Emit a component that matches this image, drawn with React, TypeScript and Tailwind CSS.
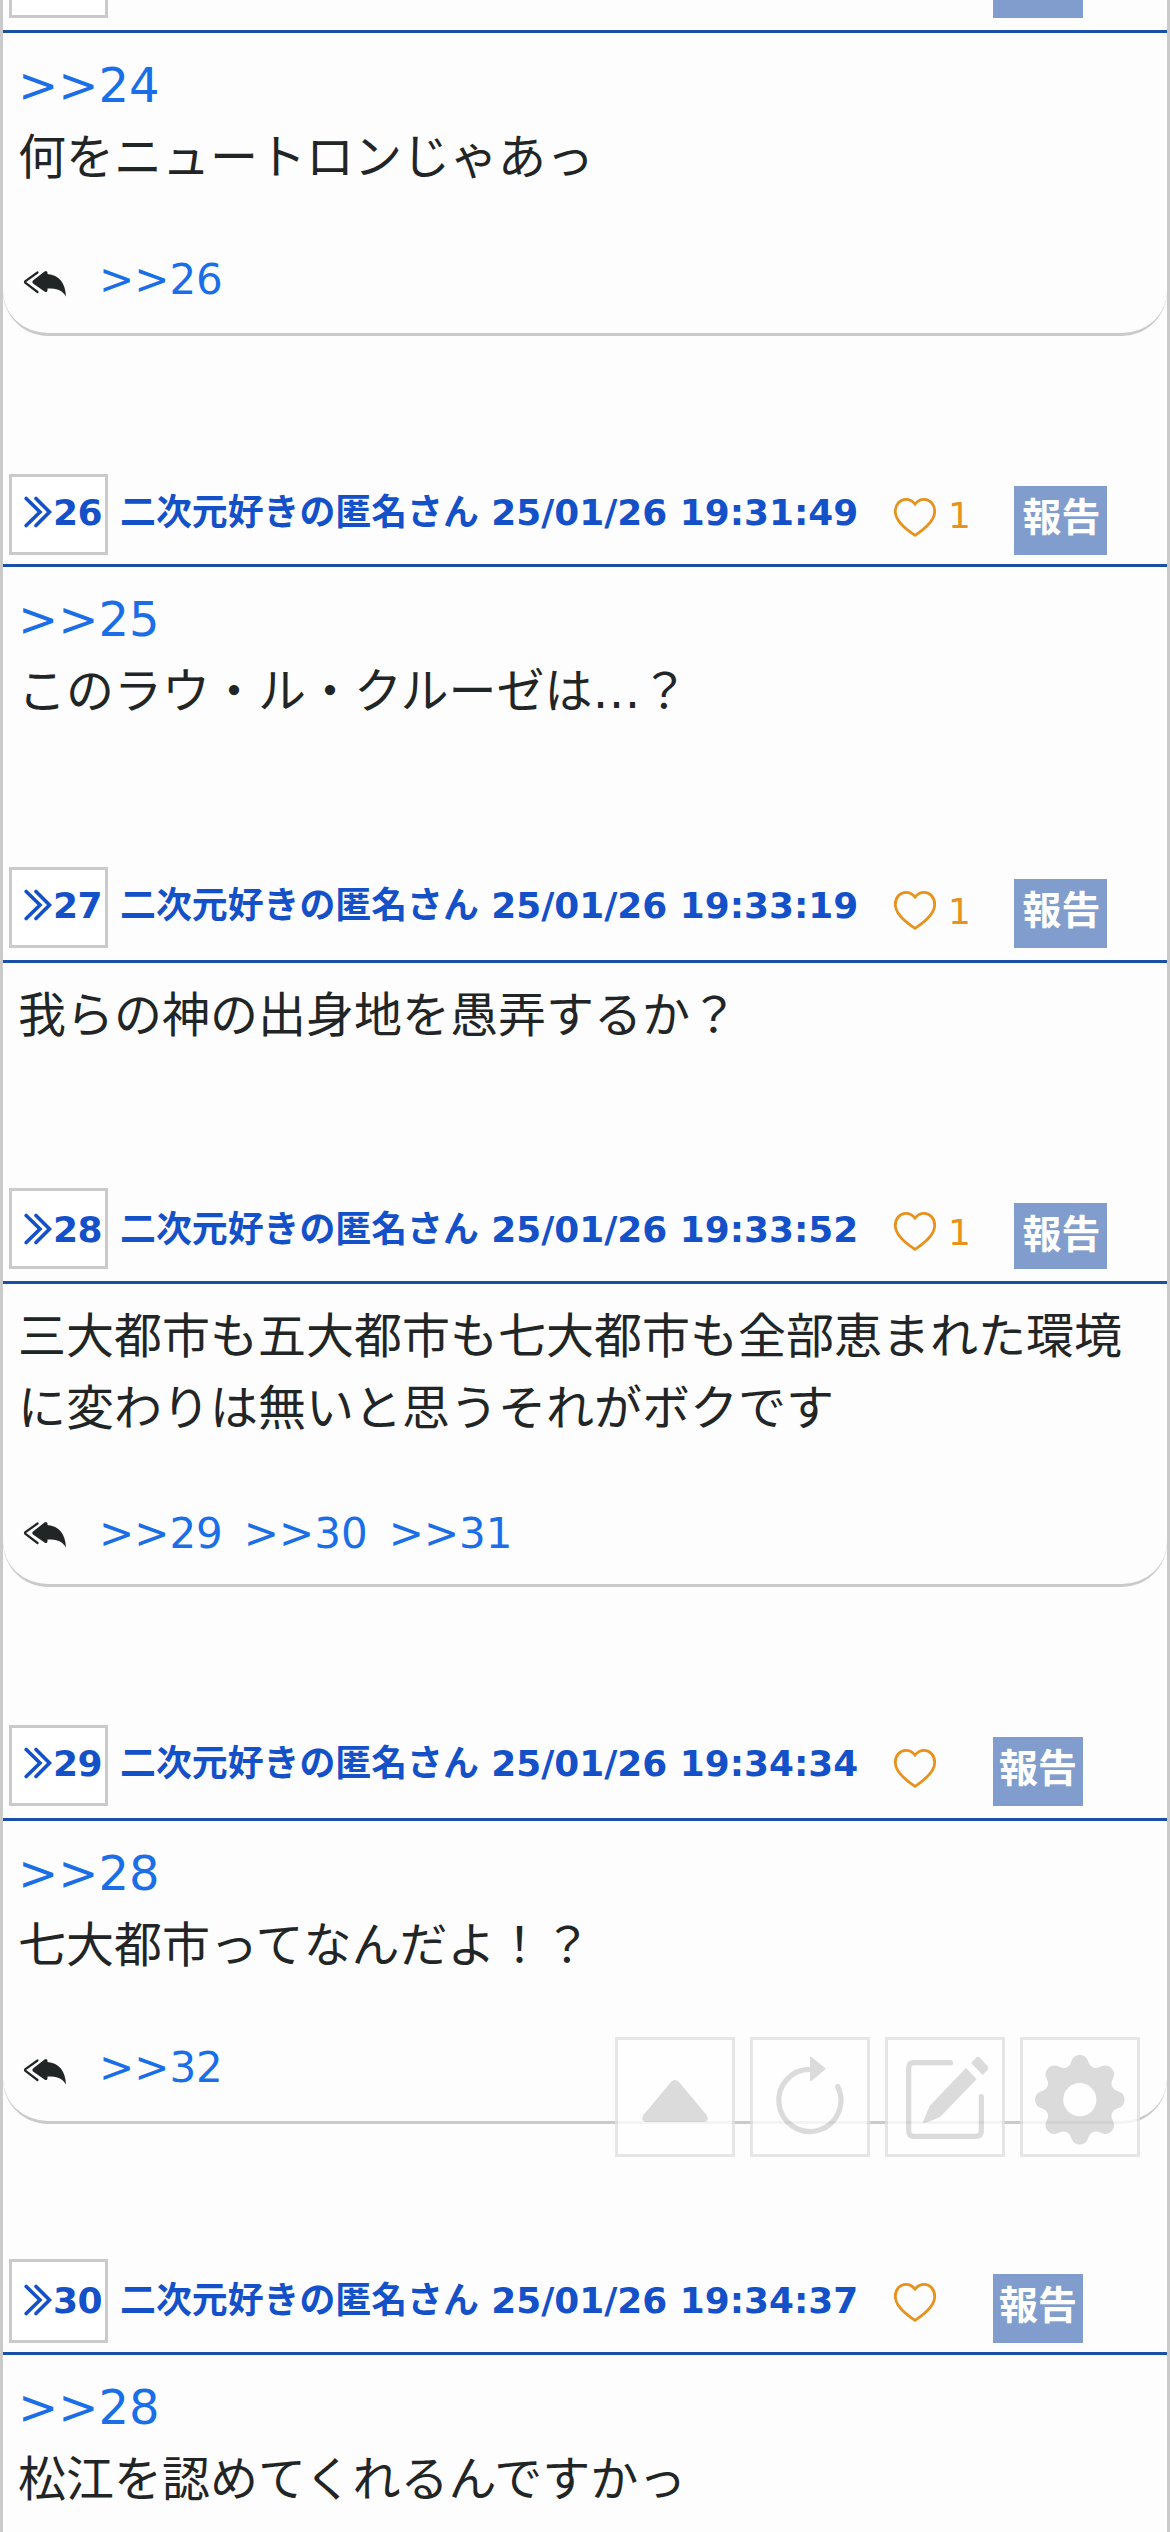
import type { ReactNode } from "react";

type Post = {
  no: number;
  date: string;
  likes?: number;
  header: string;
  box: string;
  name: string;
  count?: string;
  report: string;
  body: string;
  quote?: number;
  lines: string[];
  replies?: number[];
  replyText?: string;
};

const posts: Post[] = [
  {
    no: 26,
    date: "25/01/26 19:31:49",
    likes: 1,
    header: "mt-[138px] pb-[9px]",
    box: "h-[81px] pt-[15px]",
    name: "pt-3",
    count: "mt-1",
    report: "mt-3 h-[69px]",
    body: "h-[300px]",
    quote: 25,
    lines: ["このラウ・ル・クルーゼは…？"],
  },
  {
    no: 27,
    date: "25/01/26 19:33:19",
    likes: 1,
    header: "pb-3",
    box: "h-[81px] pt-[15px]",
    name: "pt-3",
    count: "mt-[7px]",
    report: "mt-3 h-[69px]",
    body: "h-[225px]",
    lines: ["我らの神の出身地を愚弄するか？"],
  },
  {
    no: 28,
    date: "25/01/26 19:33:52",
    likes: 1,
    header: "pb-3",
    box: "h-[81px] pt-[18px]",
    name: "pt-[15px]",
    count: "mt-[7px]",
    report: "mt-[15px] h-[66px]",
    body: "h-[303px]",
    lines: ["三大都市も五大都市も七大都市も全部恵まれた環境", "に変わりは無いと思うそれがボクです"],
    replies: [29, 30, 31],
    replyText: "pt-1.5",
  },
  {
    no: 29,
    date: "25/01/26 19:34:34",
    header: "mt-[138px] pb-3",
    box: "h-[81px] pt-[15px]",
    name: "pt-3",
    report: "mt-3 h-[69px]",
    body: "h-[303px]",
    quote: 28,
    lines: ["七大都市ってなんだよ！？"],
    replies: [32],
  },
  {
    no: 30,
    date: "25/01/26 19:34:37",
    header: "mt-[135px] pb-[9px]",
    box: "h-[84px] pt-[18px]",
    name: "pt-[15px]",
    report: "mt-[15px] h-[69px]",
    body: "h-[300px]",
    quote: 28,
    lines: ["松江を認めてくれるんですかっ"],
  },
];

function Chevrons() {
  return (
    <svg className="h-[38px] w-[29px] shrink-0" viewBox="0 0 29 38" fill="none" stroke="#1450c8" strokeWidth="3.6" strokeLinecap="round">
      <path d="M2.200 6.500L16 20L2.200 33.500M12 6.500L25.500 20L12 33.500" />
    </svg>
  );
}

function Heart() {
  return (
    <svg className="h-[48px] w-[48px] shrink-0" viewBox="0 0 48 48" fill="none" stroke="#e8921e" strokeWidth="2.8">
      <path d="M24 13C21.500 10 18.500 8.300 15 8.300C9 8.300 4.300 13.500 4.300 20.500C4.300 29 12 36.500 24 44.300C36 36.500 43.700 29 43.700 20.500C43.700 13.500 39 8.300 33 8.300C29.500 8.300 26.500 10 24 13Z" />
    </svg>
  );
}

function ReplyIcon() {
  return (
    <svg className="h-[28px] w-[44px]" viewBox="0 0 44 28">
      <path d="M14.500 2.500L2.500 11Q1.500 12 2.500 13L14.500 22" fill="none" stroke="#222526" strokeWidth="2.200" strokeLinecap="round" />
      <path d="M10 10.500L21.500 1.500Q24 0 24.500 2.500V4C36 5 42.500 13 43 26.500C39 20 34 18.500 24.500 18.500V20.500Q24 23 21.500 21.500L10 13.500Q8.500 12 10 10.500Z" fill="#222526" />
    </svg>
  );
}

function PostHeader({ post }: { post: Post }) {
  return (
    <div className={`flex items-start border-b-3 border-[#1a4fa8] pl-1.5 ${post.header}`}>
      <div className={`flex w-[99px] shrink-0 items-start border-3 border-[#cacaca] bg-white pl-3 text-[36px] leading-[42px] font-bold tracking-[-0.5px] text-[#1450c8] ${post.box}`}>
        <Chevrons />
        <span>{post.no}</span>
      </div>
      <div className={`ml-[12px] w-[742px] shrink-0 text-[35.88px] leading-[54px] font-bold whitespace-nowrap text-[#1450c8] ${post.name}`}>
        二次元好きの匿名さん {post.date}
      </div>
      <div className="mt-[17px] ml-[29px] flex h-[48px] shrink-0 items-start text-[36px] leading-[42px] text-[#e8921e]">
        <Heart />
        {post.likes && <span className={`ml-[9px] w-[23px] ${post.count}`}>{post.likes}</span>}
      </div>
      <div className={`shrink-0 bg-[#819dcd] text-center text-[39px] leading-[63px] font-bold text-white ${post.report} ${post.likes ? "ml-[43px] w-[93px] pl-0.5" : "ml-[54px] w-[90px]"}`}>
        報告
      </div>
    </div>
  );
}

function PostBody({ body, quote, lines, replies, replyText = "" }: Pick<Post, "body" | "quote" | "lines" | "replies" | "replyText">) {
  return (
    <div className={`${body} pt-4 ${replies ? "rounded-b-[45px] border-b-3 border-[#cacaca]" : ""}`}>
      <div className="pl-[15px] text-[48px] leading-[72px] whitespace-nowrap text-[#222526]">
        {quote && <div className="text-[#1a6fe8]">&gt;&gt;{quote}</div>}
        {lines.map((line) => (
          <div key={line}>{line}</div>
        ))}
      </div>
      {replies && (
        <div className="mt-[50px] flex h-[72px] items-center gap-[21px] pl-5 text-[42px] text-[#1a6fe8]">
          <div className="mr-[11px] pt-2.5">
            <ReplyIcon />
          </div>
          {replies.map((no) => (
            <span key={no} className={replyText}>
              &gt;&gt;{no}
            </span>
          ))}
        </div>
      )}
    </div>
  );
}

function ToolButton({ children }: { children: ReactNode }) {
  return (
    <button className="h-[120px] w-[120px] border-3 border-[#e1e1e1] bg-white">
      <svg className="h-[114px] w-[114px]" viewBox="0 0 114 114" fill="#d3d3d3">
        {children}
      </svg>
    </button>
  );
}

const teeth = [0, 45, 90, 135, 180, 225, 270, 315];

function Toolbar() {
  return (
    <div className="absolute top-[2037px] left-[612px] flex gap-[15px] opacity-80">
      {/* back to top */}
      <ToolButton>
        <path d="M53 42Q57 38 61 42L88.500 75Q92 81 86 82H28Q22 81 25.500 75Z" />
      </ToolButton>
      {/* reload */}
      <ToolButton>
        <path d="M58 29.300A31.100 31.100 0 1 0 84.700 46.500" fill="none" stroke="#d3d3d3" strokeWidth="5.200" strokeLinecap="round" />
        <path d="M57 18Q57 16 59 17.500L73 28.800L59 40.500Q57 42 57 40Z" />
      </ToolButton>
      {/* write */}
      <ToolButton>
        <path d="M62.500 22.700H26Q20.700 22.700 20.700 28V91Q20.700 96.300 26 96.300H88Q93.300 96.300 93.300 91V56.500" fill="none" stroke="#d3d3d3" strokeWidth="5.200" strokeLinecap="round" />
        <path d="M78 28L88.600 39.300L53 76Q51 78 36.500 83Q34.500 83 35.500 81L41 67.500Q41.500 66 43 64.500Z" />
        <path d="M83.500 22.500L88.500 17.500Q90 16 91.500 17.500L99.500 26Q101 28 99.500 30L94.800 35L83.500 23.500Z" />
      </ToolButton>
      {/* settings */}
      <ToolButton>
        <g transform="translate(56.800 59.700)">
          {teeth.map((deg) => (
            <path key={deg} transform={`rotate(${deg})`} d="M0 0L-13.400 -32.300C-9.700 -33.800 -9 -37 -8 -39.500C-5.500 -46.500 5.500 -46.500 8 -39.500C9 -37 9.700 -33.800 13.400 -32.300Z" />
          ))}
          <circle r="33.500" />
          <circle r="16.600" fill="#fff" />
        </g>
      </ToolButton>
    </div>
  );
}

export default function App() {
  return (
    <div className="relative h-[2532px] w-[1170px] overflow-hidden border-x-3 border-[#cacaca] bg-[#fdfdfd] font-['DejaVu_Sans','Noto_Sans_CJK_JP',sans-serif]">
      {/* post 25, header scrolled off the top */}
      <div className="flex h-[33px] items-start border-b-3 border-[#1a4fa8] pl-1.5">
        <div className="h-[18px] w-[99px] border-3 border-t-0 border-[#cacaca] bg-white" />
        <div className="ml-[885px] h-[18px] w-[90px] bg-[#819dcd]" />
      </div>
      <PostBody body="h-[303px]" quote={24} lines={["何をニュートロンじゃあっ"]} replies={[26]} />

      {posts.map((post) => (
        <div key={post.no} className="flow-root">
          <PostHeader post={post} />
          <PostBody {...post} />
        </div>
      ))}
      <Toolbar />
    </div>
  );
}
